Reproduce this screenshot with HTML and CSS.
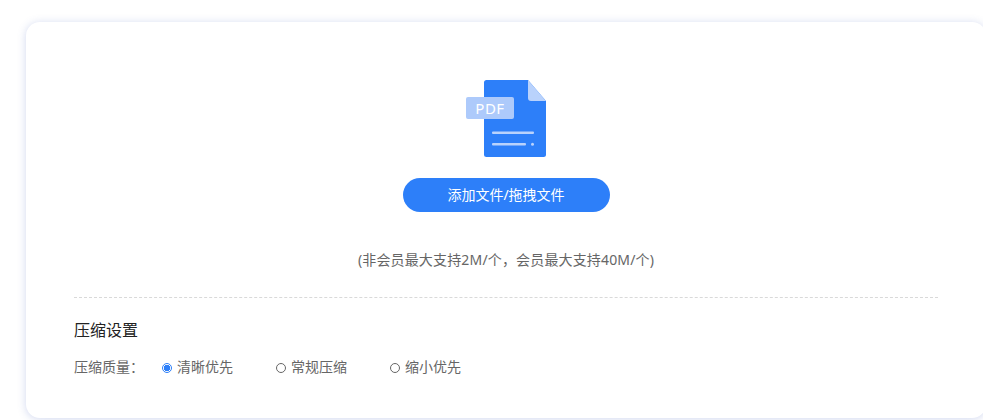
FILE: index.html
```html
<!DOCTYPE html>
<html lang="zh-CN">
<head>
  <meta charset="UTF-8" />
  <title>PDF压缩</title>
  <link rel="stylesheet" href="styles.css">
</head>
<body>
  <main class="panel">
    <section class="upload">
      <svg class="pdf-icon" width="82" height="78" viewBox="0 0 82 78">
        <path d="M20 2.500q0-2.500 2.500-2.500H64L82 21v53.500q0 2.500-2.500 2.500h-57q-2.500 0-2.500-2.500z" fill="#2d7ff9"/>
        <path d="M64 0 82 21H67q-3 0-3-3z" fill="#b9d2fc"/>
        <rect x="2" y="17" width="48" height="22" rx="2" fill="#adcafb"/>
        <text class="pdf-label" x="26" y="33.500" text-anchor="middle">PDF</text>
        <rect x="28" y="51.500" width="42" height="2.500" rx="1" fill="#b9d2fc"/>
        <rect x="28" y="63" width="34" height="2.500" rx="1" fill="#b9d2fc"/>
        <circle cx="68.500" cy="64.300" r="1.500" fill="#b9d2fc"/>
      </svg>
      <button class="add-btn" type="button">添加文件/拖拽文件</button>
      <p class="hint">(非会员最大支持2M/个，会员最大支持40M/个)</p>
    </section>

    <section class="settings">
      <h2>压缩设置</h2>
      <div class="quality">
        <span class="quality-label">压缩质量：</span>
        <label class="option"><input type="radio" name="quality" checked>清晰优先</label>
        <label class="option"><input type="radio" name="quality">常规压缩</label>
        <label class="option"><input type="radio" name="quality">缩小优先</label>
      </div>
    </section>
  </main>
</body>
</html>
```
FILE: styles.css
```css
* {
  margin: 0;
  padding: 0;
  box-sizing: border-box;
}
html, body {
  height: 420px;
  overflow: hidden;
}
body {
  background: #fff;
  font-family: "Noto Sans", "Noto Sans CJK SC", sans-serif;
  padding: 22px 0 0 26px;
}
.panel {
  width: 960px;
  height: 396px;
  background: #fff;
  border-radius: 14px;
  padding: 0 48px;
  box-shadow: 0 1px 8px rgba(70, 100, 190, 0.25);
}
.upload {
  display: flex;
  flex-direction: column;
  align-items: center;
  padding-top: 58px;
  height: 276px;
  border-bottom: 1px dashed #d9d9d9;
}
.pdf-icon {
  display: block;
  margin-right: 3px;
}
.pdf-label {
  font-family: "Noto Sans", sans-serif;
  font-size: 15px;
  letter-spacing: 0.5px;
  fill: #fff;
}
.add-btn {
  width: 207px;
  height: 34px;
  margin-top: 20px;
  padding-bottom: 2px;
  border: 0;
  border-radius: 17px;
  background: #2d7ff9;
  color: #fff;
  font-family: inherit;
  font-size: 14px;
}
.hint {
  margin-top: 38px;
  font-size: 14px;
  line-height: 20px;
  letter-spacing: 0.16px;
  color: #666;
}
.settings h2 {
  margin-top: 22px;
  font-size: 16px;
  font-weight: 400;
  line-height: 20px;
  color: #222;
}
.quality {
  display: flex;
  align-items: center;
  margin-top: 17px;
  font-size: 14px;
  line-height: 20px;
  color: #666;
}
.quality-label {
  width: 88px;
}
.option {
  display: flex;
  align-items: center;
  width: 114px;
}
.option input {
  appearance: none;
  width: 10px;
  height: 10px;
  margin: 1px 5px 0 0;
  border: 1px solid #666;
  border-radius: 50%;
  background: #fff;
}
.option input:checked {
  border-color: #2d7ff9;
  background: radial-gradient(circle, #2d7ff9 0 3px, #fff 3.5px);
}
```
